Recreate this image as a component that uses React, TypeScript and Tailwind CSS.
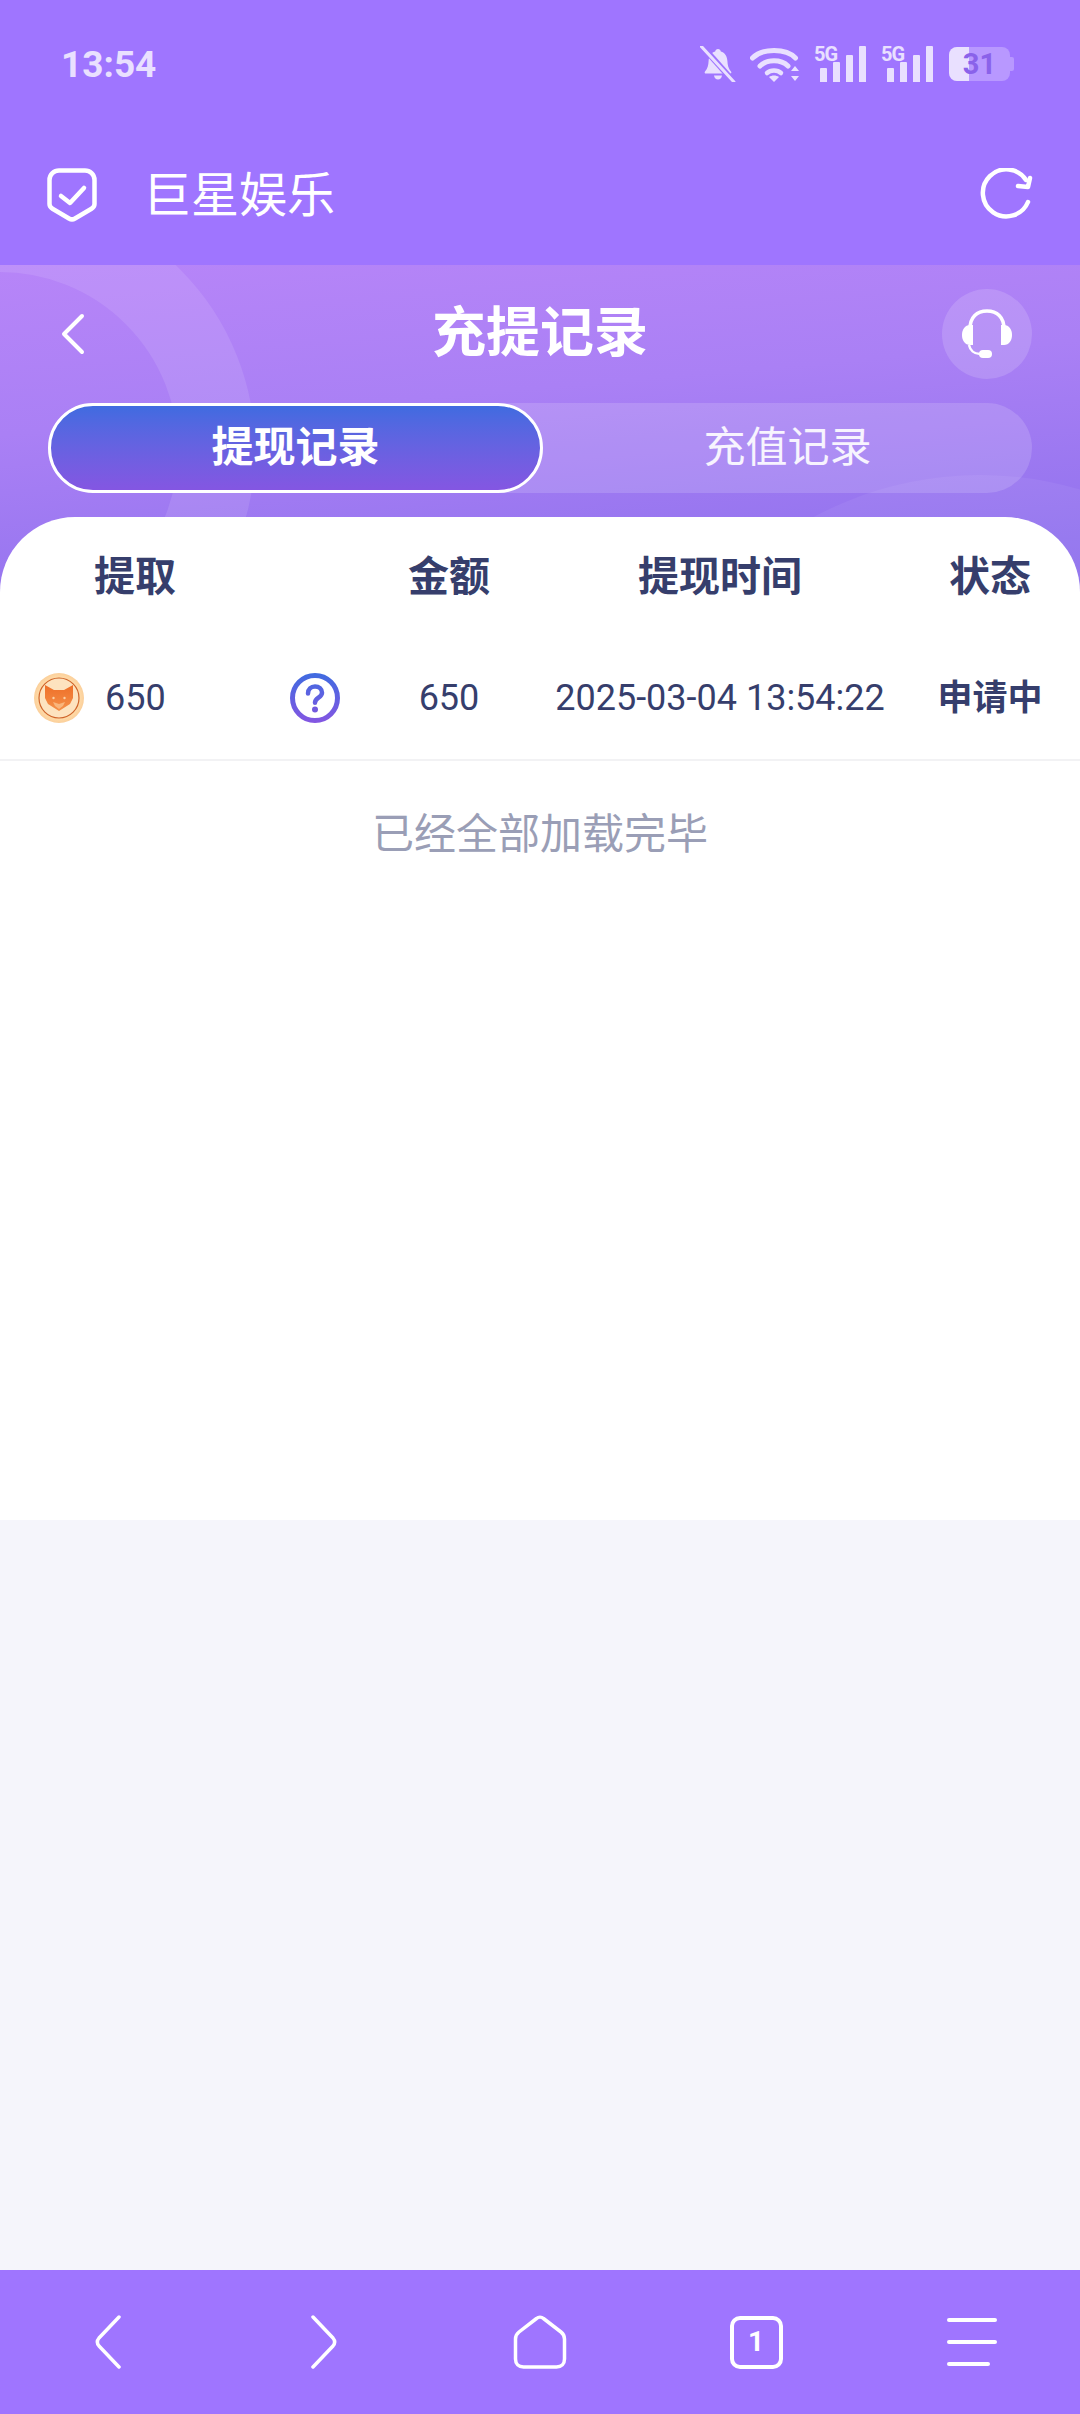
const cjk = "font-['Roboto','Noto_Sans_CJK_SC',sans-serif]";

// Small icons for the phone status bar
function StatusIcons() {
  return (
    <div className="flex items-start text-[#e9e0ff]">
      <svg width="36" height="36" viewBox="0 0 36 36" className="mr-[14px]">
        <path d="M18 3c1.600 0 2.600 1 2.800 2.400 4.200 1.200 6.400 4.600 6.600 9.600.2 4.400 1 7.400 3.600 10.400.8 1 .2 2.200-1 2.200H6c-1.200 0-1.800-1.200-1-2.200 2.600-3 3.400-6 3.600-10.400.2-5 2.400-8.400 6.600-9.600C15.400 4 16.400 3 18 3z" fill="currentColor" />
        <path d="M14 29.500h8c-.4 2.400-2 4-4 4s-3.600-1.600-4-4z" fill="currentColor" />
        <path d="M2 0l32 36" stroke="#9f75ff" strokeWidth="6" />
        <path d="M1 0l33 36" stroke="currentColor" strokeWidth="3" strokeLinecap="round" />
      </svg>
      <svg width="50" height="36" viewBox="0 0 50 36" className="mr-[14px]" fill="none">
        <path d="M2.500 12C12 2 36 2 45.500 12" stroke="currentColor" strokeWidth="5" strokeLinecap="round" />
        <path d="M10 20c7-7 21-7 28 0" stroke="currentColor" strokeWidth="5" strokeLinecap="round" />
        <path d="M17 27c3.600-3.400 10.400-3.400 14 0" stroke="currentColor" strokeWidth="4.500" strokeLinecap="round" />
        <path d="M24 36l-5-5c3-2 7-2 10 0z" fill="currentColor" />
        <path d="M45 20l4 5h-8zM45 35l-4-5h8z" fill="currentColor" />
      </svg>
      <SignalBars />
      <div className="w-[15px]" />
      <SignalBars />
      <div className="ml-[16px] mt-[1px] flex h-[34px] w-[65px] items-center">
        <div className="relative flex h-full w-[61px] items-center justify-center overflow-hidden rounded-[8px] bg-[#b898ff]">
          <div className="absolute inset-y-0 left-0 w-[20px] bg-[#e9e0ff]" />
          <span className="relative font-['Roboto',sans-serif] text-[29px] font-bold leading-none text-[#8a62ea]">31</span>
        </div>
        <div className="h-[14px] w-[4px] rounded-r-[2px] bg-[#b898ff]" />
      </div>
    </div>
  );
}

function SignalBars() {
  return (
    <div className="relative flex h-[36px] w-[52px] items-end justify-end gap-[6px]">
      <span className="absolute left-0 top-[-2px] font-['Roboto',sans-serif] text-[20px] font-bold leading-none tracking-[-1px]">5G</span>
      <span className="h-[14px] w-[7px] rounded-t-[1px] bg-current" />
      <span className="h-[20px] w-[7px] rounded-t-[1px] bg-current" />
      <span className="h-[27px] w-[7px] rounded-t-[1px] bg-current" />
      <span className="h-[36px] w-[7px] rounded-t-[1px] bg-current" />
    </div>
  );
}

function CoinIcon() {
  return (
    <svg width="50" height="50" viewBox="0 0 50 50">
      <defs>
        <radialGradient id="coin" cx="50%" cy="50%" r="50%">
          <stop offset="0%" stopColor="#ffe9cc" />
          <stop offset="80%" stopColor="#ffdcaa" />
          <stop offset="100%" stopColor="#fbcf9a" />
        </radialGradient>
        <linearGradient id="fox" x1="0" y1="0" x2="0" y2="1">
          <stop offset="0%" stopColor="#ee6f28" />
          <stop offset="100%" stopColor="#f5914a" />
        </linearGradient>
      </defs>
      <circle cx="25" cy="25" r="25" fill="url(#coin)" />
      <circle cx="25" cy="25" r="20" fill="#fde3bf" stroke="#cf642a" strokeWidth="1.200" />
      <path d="M11 12l9 5h10l9-5v13l-3 6-11 7-11-7-3-6z" fill="url(#fox)" />
      <path d="M19 29l6 2 6-2-2 4-4 3-4-3z" fill="#f9b67c" />
      <circle cx="19.500" cy="25" r="1.200" fill="#fbd0a4" />
      <circle cx="30.500" cy="25" r="1.200" fill="#fbd0a4" />
    </svg>
  );
}

function QuestionIcon() {
  return (
    <svg width="50" height="50" viewBox="0 0 50 50" fill="none">
      <defs>
        <linearGradient id="ring" gradientUnits="userSpaceOnUse" x1="0" y1="0" x2="0" y2="50">
          <stop offset="0%" stopColor="#3f6be0" />
          <stop offset="100%" stopColor="#8456e2" />
        </linearGradient>
      </defs>
      <circle cx="25" cy="25" r="22.500" stroke="url(#ring)" strokeWidth="5" />
      <path d="M18 20.500c0-4.200 3-7 7-7s7 2.600 7 6.200c0 5-7 5-7 10" stroke="url(#ring)" strokeWidth="4.500" strokeLinecap="round" />
      <circle cx="25" cy="36.500" r="3" fill="#7259de" />
    </svg>
  );
}

// Bottom browser toolbar
function BottomNav() {
  return (
    <div className="grid h-[144px] grid-cols-5 items-center bg-[#9f75ff] text-white">
      <div className="flex justify-center">
        <svg width="30" height="54" viewBox="0 0 30 54" fill="none" stroke="currentColor" strokeWidth="3.500" strokeLinecap="round" strokeLinejoin="round">
          <path d="M26 2L6 23c-2 2.400-2 5.600 0 8l20 21" />
        </svg>
      </div>
      <div className="flex justify-center">
        <svg width="30" height="54" viewBox="0 0 30 54" fill="none" stroke="currentColor" strokeWidth="3.500" strokeLinecap="round" strokeLinejoin="round">
          <path d="M4 2l20 21c2 2.400 2 5.600 0 8L4 52" />
        </svg>
      </div>
      <div className="flex justify-center">
        <svg width="54" height="54" viewBox="0 0 54 54" fill="none" stroke="currentColor" strokeWidth="3.500" strokeLinejoin="round">
          <path d="M23.500 3.500c2-1.800 5-1.800 7 0L48 17c2 1.600 3.500 4 3.500 7v20c0 5-3 8-8 8h-33c-5 0-8-3-8-8V24c0-3 1.500-5.400 3.500-7z" />
        </svg>
      </div>
      <div className="flex justify-center">
        <div className="flex h-[53px] w-[53px] items-center justify-center rounded-[10px] border-[4px] border-white font-['Roboto',sans-serif] text-[28px] font-bold leading-none">
          1
        </div>
      </div>
      <div className="flex justify-center">
        <div className="flex w-[50px] flex-col gap-[18px]">
          <div className="h-[4px] w-full rounded-full bg-white" />
          <div className="h-[4px] w-full rounded-full bg-white" />
          <div className="h-[4px] w-[43px] rounded-full bg-white" />
        </div>
      </div>
    </div>
  );
}

export default function App() {
  return (
    <div className={`flex min-h-[2414px] flex-col bg-[#f5f5fb] ${cjk}`}>
      {/* Status bar */}
      <div className="flex h-[125px] items-start justify-between bg-[#9f75ff] pl-[61px] pr-[66px] pt-[46px]">
        <span className="font-['Roboto',sans-serif] text-[37px] font-bold leading-[37px] text-[#e9e0ff]">13:54</span>
        <StatusIcons />
      </div>

      {/* App bar */}
      <div className="flex h-[140px] items-center bg-[#9f75ff] pl-[47px] pr-[46px] text-white">
        <svg width="50" height="54" viewBox="0 0 50 54" fill="none" stroke="currentColor" strokeWidth="4.500" strokeLinejoin="round" strokeLinecap="round">
          <path d="M12 2.500h26c5 0 9.500 4 9.500 9.500v24c0 2-1 3.500-3 4.700L28 50.500c-2 1.200-4 1.200-6 0L5.500 40.700c-2-1.200-3-2.700-3-4.700V12c0-5.500 4.500-9.500 9.500-9.500z" />
          <path d="M14 28l9 7 14-15" />
        </svg>
        <span className="ml-[46px] mt-[1px] text-[48px] leading-none">巨星娱乐</span>
        <svg width="54" height="54" viewBox="0 0 54 54" fill="none" stroke="currentColor" strokeWidth="4.500" strokeLinecap="round" strokeLinejoin="round" className="ml-auto">
          <path d="M48 34A23.500 23.500 0 1 1 46 12" />
          <path d="M38 18l10 1 2-9" />
        </svg>
      </div>

      {/* Page header with tabs */}
      <div className="relative h-[330px] overflow-hidden bg-[linear-gradient(175deg,#b785f8,#aa80f5_40%,#8b6fec)] px-[48px] pt-[24px] text-white">
        <div className="absolute left-[-255px] top-[-70px] h-[510px] w-[510px] rounded-full border-[77px] border-white/10" />
        <div className="absolute left-[630px] top-[210px] h-[700px] w-[700px] rounded-full bg-white/5" />

        <div className="relative flex h-[90px] items-center justify-between">
          <svg width="26" height="42" viewBox="0 0 26 42" fill="none" stroke="currentColor" strokeWidth="4" strokeLinecap="round" strokeLinejoin="round" className="ml-[12px]">
            <path d="M22 3L4 21l18 18" />
          </svg>
          <span className="absolute left-[-48px] right-[-48px] text-center text-[54px] font-bold leading-none">充提记录</span>
          <div className="flex h-[90px] w-[90px] items-center justify-center rounded-full bg-white/15">
            <svg width="52" height="50" viewBox="0 0 52 50" fill="none">
              <path d="M9 20C9 8 16 2 26 2s17 6 17 18" stroke="white" strokeWidth="3.500" />
              <path d="M12 16v20H9c-5 0-8-4.500-8-10s3-10 8-10z" fill="white" />
              <path d="M40 16v20h3c5 0 8-4.500 8-10s-3-10-8-10z" fill="white" />
              <path d="M8 36c1 5 5 9 11 9" stroke="white" strokeWidth="2.500" />
              <rect x="18" y="41" width="13" height="8" rx="4" fill="white" />
            </svg>
          </div>
        </div>

        <div className="relative mt-[24px] flex h-[90px] rounded-full bg-white/15">
          <div className="flex w-[495px] items-center justify-center rounded-full border-[3px] border-white bg-gradient-to-b from-[#3f6be0] to-[#8456e2] text-[42px] font-bold leading-none">
            提现记录
          </div>
          <div className="flex flex-1 items-center justify-center text-[42px] leading-none text-white/90">充值记录</div>
        </div>
      </div>

      {/* Record list */}
      <div className="relative -mt-[78px] h-[1003px] rounded-t-[75px] bg-white">
        <div className="grid h-[120px] grid-cols-[370px_158px_384px_168px] items-center text-center text-[41px] font-bold leading-none text-[#363e6c]">
          <div className="w-[270px]">提取</div>
          <div>金额</div>
          <div>提现时间</div>
          <div className="pr-[12px]">状态</div>
        </div>
        <div className="grid h-[124px] grid-cols-[370px_158px_384px_168px] items-center border-b-[2px] border-[#f2f2f4] text-[36px] leading-none text-[#363e6c]">
          <div className="flex items-center pl-[34px]">
            <CoinIcon />
            <span className="ml-[21px]">650</span>
            <div className="ml-[124px]">
              <QuestionIcon />
            </div>
          </div>
          <div className="text-center">650</div>
          <div className="whitespace-nowrap text-center">2025-03-04 13:54:22</div>
          <div className="pr-[12px] text-center text-[35px] font-bold">申请中</div>
        </div>
        <div className="pt-[53px] text-center text-[42px] leading-none text-[#9a9eb6]">已经全部加载完毕</div>
      </div>

      <div className="flex-1" />
      <BottomNav />
    </div>
  );
}
